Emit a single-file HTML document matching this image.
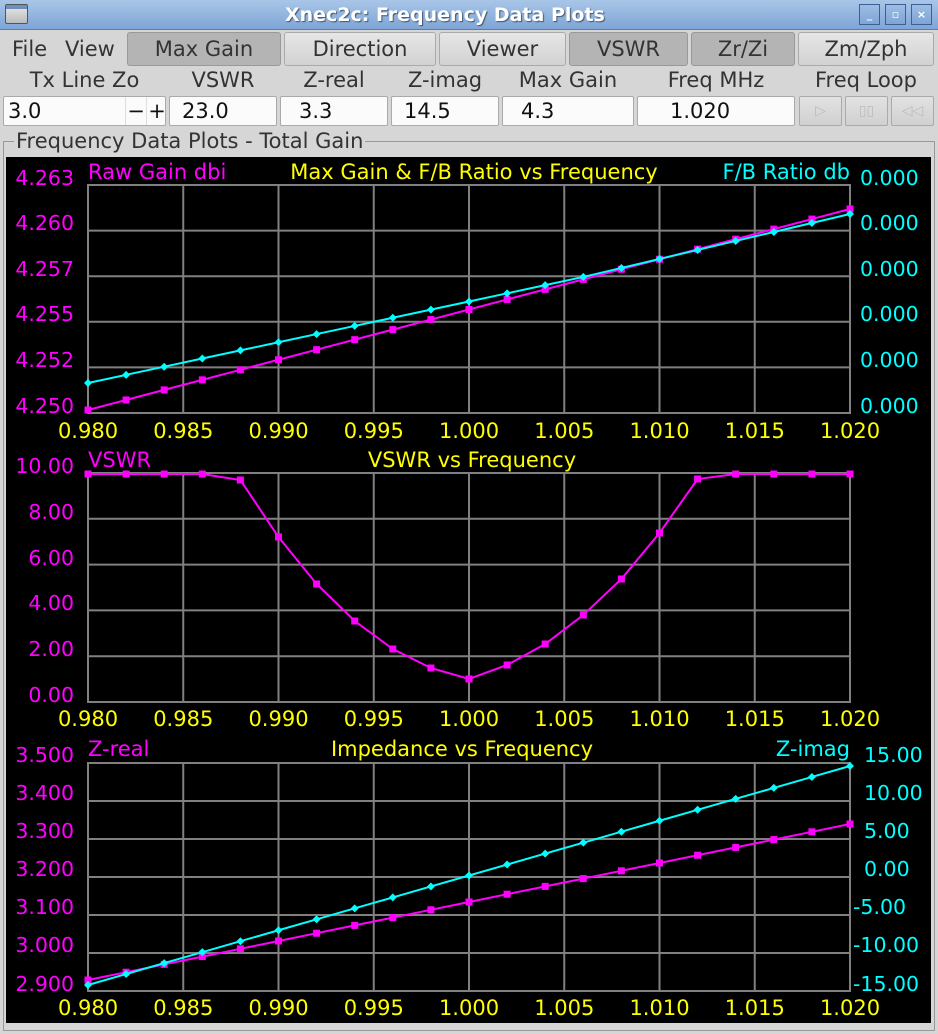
<!DOCTYPE html>
<html><head><meta charset="utf-8">
<style>
*{margin:0;padding:0;box-sizing:border-box}
body{width:938px;height:1034px;background:#d6d6d6;font-family:"DejaVu Sans","Liberation Sans",sans-serif;position:relative;overflow:hidden;color:#333}
.tb{position:absolute;left:0;top:0;width:938px;height:30px;background:linear-gradient(#a9c6e8,#7ea5d6);border-bottom:1px solid #5a7fae}
.tb .t{position:absolute;left:285px;top:4px;color:#fff;font-weight:bold;font-size:19px;text-shadow:1px 1px 1px #456;white-space:nowrap}
.wb{position:absolute;top:4px;width:21px;height:21px;border:1px solid #3c5f94;background:linear-gradient(#9dbde3,#7ea5d6);color:#fff;font-size:11px;text-align:center;line-height:19px;font-weight:bold}
.ic{position:absolute;left:5px;top:4px;width:23px;height:20px;border:1px solid #555;background:linear-gradient(#e8e8e8,#bbb);border-radius:2px}
.ic:before{content:"";position:absolute;left:0;top:0;right:0;height:4px;background:#6f8fba}
.btn{position:absolute;top:32px;height:34px;border:1px solid #aaa;border-radius:3px;background:linear-gradient(#e6e6e6,#d2d2d2);font-size:21px;text-align:center;line-height:32px;color:#333}
.btn.on{background:#b4b4b4;border-color:#999}
.lab{position:absolute;top:68px;font-size:21px;color:#333;text-align:center;white-space:nowrap}
.in{position:absolute;top:96px;height:30px;border:1px solid #aaa;border-radius:2px;background:#fbfbfb;font-size:21px;line-height:28px;color:#111}
.sb{position:absolute;top:96px;height:30px;border:1px solid #aaa;border-radius:2px;background:linear-gradient(#e2e2e2,#d0d0d0);color:#bbb;text-align:center;font-size:14px;line-height:28px}
.frame{position:absolute;left:3px;top:141px;width:932px;height:890px;border:1px solid #999}
.flab{position:absolute;left:14px;top:129px;background:#d6d6d6;font-size:21px;padding:0 2px;color:#333;white-space:nowrap}
svg{position:absolute;left:6px;top:157px}
</style></head><body>
<div class="tb"><div class="ic"></div><div class="t">Xnec2c: Frequency Data Plots</div>
<div class="wb" style="left:859px">_</div><div class="wb" style="left:885px">▫</div><div class="wb" style="left:911px">×</div></div>
<div style="position:absolute;left:12px;top:37px;font-size:21px">File</div>
<div style="position:absolute;left:65px;top:37px;font-size:21px">View</div>
<div class="btn on" style="left:127px;width:154px">Max Gain</div>
<div class="btn" style="left:284px;width:152px">Direction</div>
<div class="btn" style="left:439px;width:127px">Viewer</div>
<div class="btn on" style="left:569px;width:119px">VSWR</div>
<div class="btn on" style="left:691px;width:104px">Zr/Zi</div>
<div class="btn" style="left:798px;width:136px">Zm/Zph</div>
<div class="lab" style="left:3px;width:163px">Tx Line Zo</div>
<div class="lab" style="left:169px;width:108px">VSWR</div>
<div class="lab" style="left:280px;width:108px">Z-real</div>
<div class="lab" style="left:391px;width:108px">Z-imag</div>
<div class="lab" style="left:502px;width:132px">Max Gain</div>
<div class="lab" style="left:637px;width:158px">Freq MHz</div>
<div class="lab" style="left:798px;width:136px">Freq Loop</div>
<div class="in" style="left:3px;width:163px;padding-left:4px">3.0<span style="position:absolute;left:121px;top:0;width:21px;height:28px;border-left:1px solid #ddd;text-align:center">−</span><span style="position:absolute;left:142px;top:0;width:21px;height:28px;border-left:1px solid #ddd;text-align:center">+</span></div>
<div class="in" style="left:169px;width:108px;padding-left:12px">23.0</div>
<div class="in" style="left:280px;width:108px;padding-left:18px">3.3</div>
<div class="in" style="left:391px;width:108px;padding-left:12px">14.5</div>
<div class="in" style="left:502px;width:132px;padding-left:18px">4.3</div>
<div class="in" style="left:637px;width:158px;padding-left:32px">1.020</div>
<div class="sb" style="left:799px;width:43px">▷</div>
<div class="sb" style="left:845px;width:43px">▯▯</div>
<div class="sb" style="left:891px;width:43px">◁◁</div>
<div class="frame"></div>
<div class="flab">Frequency Data Plots - Total Gain</div>
<svg width="925" height="866" viewBox="6 157 925 866" xmlns="http://www.w3.org/2000/svg" font-family="DejaVu Sans, Liberation Sans, sans-serif" font-size="21">
<rect x="6" y="157" width="925" height="866" fill="#000"/>
<g id="grid" stroke="#808080" stroke-width="2" fill="none"></g>
<g id="data"></g>
<g fill="#ff00ff" text-anchor="end" font-size="20.5">
<text x="74" y="185">4.263</text><text x="74" y="230">4.260</text><text x="74" y="276">4.257</text><text x="74" y="321">4.255</text><text x="74" y="367">4.252</text><text x="74" y="413">4.250</text>
<text x="74" y="473">10.00</text><text x="74" y="519">8.00</text><text x="74" y="565">6.00</text><text x="74" y="610">4.00</text><text x="74" y="656">2.00</text><text x="74" y="702">0.00</text>
<text x="74" y="762">3.500</text><text x="74" y="800">3.400</text><text x="74" y="838">3.300</text><text x="74" y="876">3.200</text><text x="74" y="914">3.100</text><text x="74" y="952">3.000</text><text x="74" y="991">2.900</text>
</g>
<g fill="#ff00ff"><text x="88" y="179">Raw Gain dbi</text><text x="88" y="467">VSWR</text><text x="88" y="756">Z-real</text></g>
<g fill="#00ffff"><text x="850" y="179" text-anchor="end">F/B Ratio db</text><text x="850" y="756" text-anchor="end">Z-imag</text>
<g font-size="20.5">
<text x="860" y="185">0.000</text><text x="860" y="230">0.000</text><text x="860" y="276">0.000</text><text x="860" y="321">0.000</text><text x="860" y="367">0.000</text><text x="860" y="413">0.000</text>
<text x="864" y="762">15.00</text><text x="864" y="800">10.00</text><text x="864" y="838">5.00</text><text x="864" y="876">0.00</text><text x="853" y="914">-5.00</text><text x="853" y="952">-10.00</text><text x="853" y="991">-15.00</text></g></g>
<g fill="#ffff00" text-anchor="middle"><text x="474" y="179">Max Gain &amp; F/B Ratio vs Frequency</text><text x="472" y="467">VSWR vs Frequency</text><text x="462" y="756">Impedance vs Frequency</text></g>
<g id="xl" fill="#ffff00" text-anchor="middle"></g>
</svg>
<script>
var NS="http://www.w3.org/2000/svg";
function el(p,t,a){var e=document.createElementNS(NS,t);for(var k in a)e.setAttribute(k,a[k]);p.appendChild(e);return e;}
var g=document.getElementById('grid'),d=document.getElementById('data'),xl=document.getElementById('xl');
var plots=[[185,413,5,438],[473,702,5,726],[763,991,6,1015]];
var xs=[];for(var i=0;i<=8;i++)xs.push(88+i*95.25);
var lbl=["0.980","0.985","0.990","0.995","1.000","1.005","1.010","1.015","1.020"];
plots.forEach(function(p){
 el(g,'rect',{x:88,y:p[0],width:762,height:p[1]-p[0]});
 for(var i=1;i<8;i++)el(g,'line',{x1:xs[i],y1:p[0],x2:xs[i],y2:p[1]});
 for(var j=1;j<p[2];j++){var y=p[0]+(p[1]-p[0])*j/p[2];el(g,'line',{x1:88,y1:y,x2:850,y2:y});}
 for(var i=0;i<9;i++){var t=el(xl,'text',{x:xs[i],y:p[3]});t.textContent=lbl[i];}
});
function series(ys,col,diamond){
 var pts=ys.map(function(y,i){return [88+i*38.1,y];});
 el(d,'polyline',{points:pts.map(function(p){return p.join(',')}).join(' '),fill:'none',stroke:col,'stroke-width':2});
 pts.forEach(function(p){
  if(diamond)el(d,'polygon',{points:(p[0])+','+(p[1]-4)+' '+(p[0]+4)+','+p[1]+' '+p[0]+','+(p[1]+4)+' '+(p[0]-4)+','+p[1],fill:col});
  else el(d,'rect',{x:p[0]-3.5,y:p[1]-3.5,width:7,height:7,fill:col});
 });
}
function lin(a,b){var r=[];for(var i=0;i<21;i++)r.push(a+(b-a)*i/20);return r;}
function cy(){var r=[];for(var i=0;i<21;i++){var x=88+i*38.1;r.push(x<=583?383-0.214*(x-88):277-0.236*(x-583));}return r;}
series(lin(410,209),'#ff00ff',false);
series(cy(),'#00ffff',true);
series([474,474,474,474,480,537,584,621,649,668,679,665,644,615,579,533,479,474,474,474,474],'#ff00ff',false);
series(lin(980,824),'#ff00ff',false);
series(lin(985,766),'#00ffff',true);
</script>
</body></html>
